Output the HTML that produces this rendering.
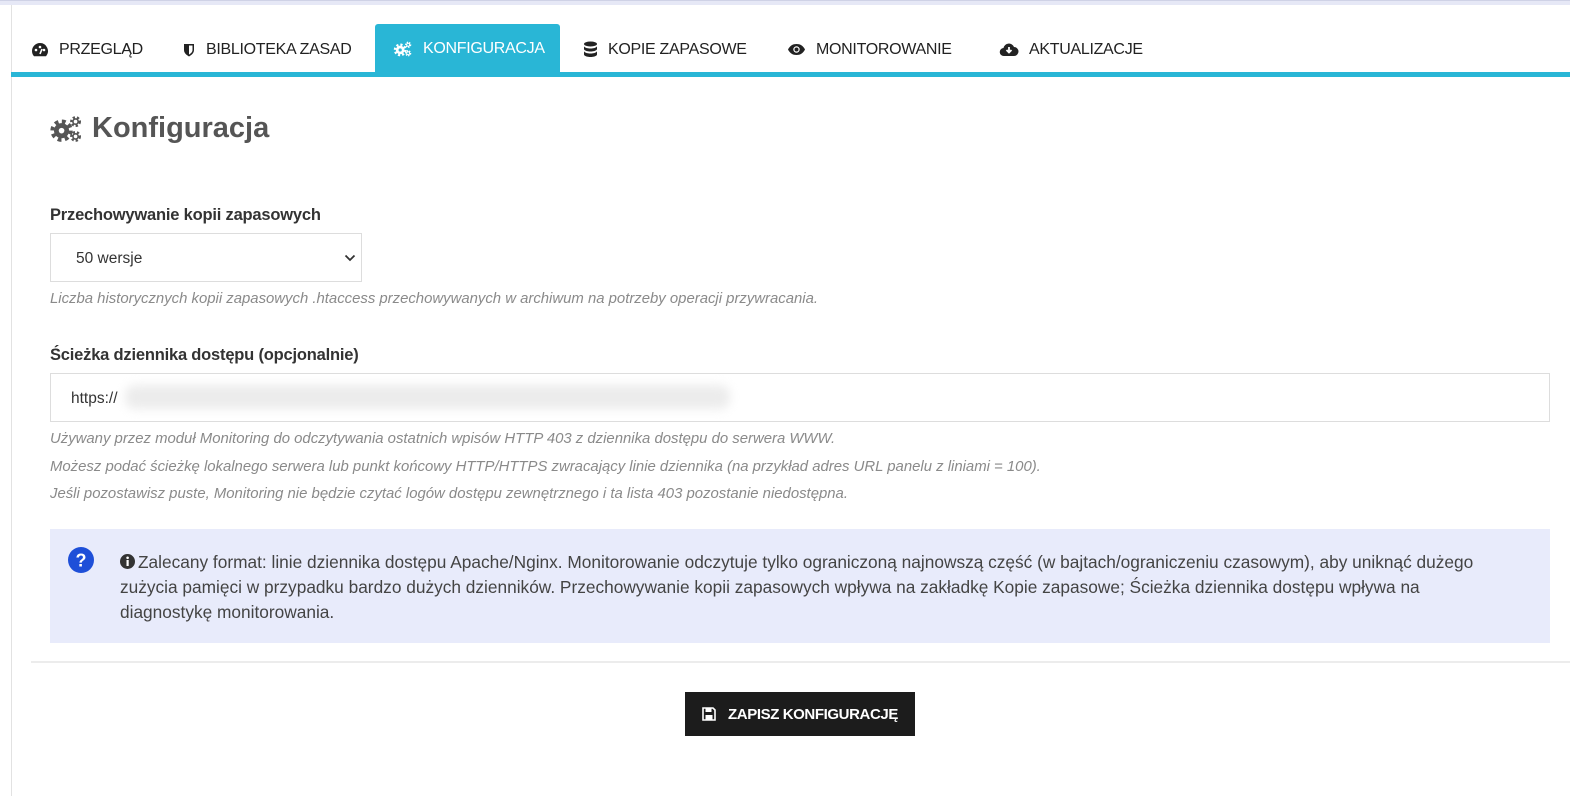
<!DOCTYPE html>
<html><head><meta charset="utf-8"><style>
*{margin:0;padding:0;box-sizing:border-box}
body{width:1570px;height:796px;background:#fff;font-family:"Liberation Sans",sans-serif;color:#333;position:relative;overflow:hidden}
.abs{position:absolute}
.top{left:0;top:0;width:1570px;height:5px;background:#e6e8f6;border-top:1px solid #cfd2e6}
.lb{left:11px;top:5px;width:1px;height:791px;background:#e2e2e2}
.tab{position:absolute;top:25px;height:49px;display:flex;align-items:center;font-size:16px;color:#222;white-space:nowrap;letter-spacing:-0.3px}
.tab svg{margin-right:10px}
.active{background:#29b6d6;color:#fff;border-radius:3px 3px 0 0;padding-left:18px;width:185px;left:375px;top:24px;height:49px}
.bar{left:11px;top:72px;width:1559px;height:5px;background:#29b6d6}
h1{position:absolute;left:50px;top:112px;font-size:29px;color:#555;font-weight:bold;display:flex;align-items:center}
label{position:absolute;font-size:16.5px;color:#333;font-weight:bold;letter-spacing:-0.2px}
.help{position:absolute;left:50px;font-size:14.9px;font-style:italic;color:#8a8a8a;white-space:nowrap}
.sel{left:50px;top:233px;width:312px;height:49px;border:1px solid #ddd;font-size:15.5px;padding:16px 25px;color:#333}
.inp{left:50px;top:373px;width:1500px;height:49px;border:1px solid #ddd;font-size:15.5px;padding:16px 20px}
.blur{left:125px;top:385px;width:605px;height:24px;background:#ececec;filter:blur(5px);border-radius:10px}
.info{left:50px;top:529px;width:1500px;height:114px;background:#e8ebfb}
.info p{position:absolute;left:70px;top:21px;width:1395px;font-size:17.3px;line-height:25px;color:#444}
.hr{left:31px;top:661px;width:1539px;height:2px;background:#ececec}
.btn{left:685px;top:692px;width:230px;height:44px;background:#1c1c1c;color:#fff;font-weight:bold;font-size:15px;display:flex;align-items:center;justify-content:center;letter-spacing:-0.4px}
</style></head><body>
<div class="abs top"></div>
<div class="abs lb"></div>

<div class="tab" style="left:31px"><svg width="18" height="16" viewBox="0 0 18 16"><path d="M9 1a8 8 0 0 0-8 8c0 2 .7 3.8 2 5.2h12A8 8 0 0 0 9 1z" fill="#222"/><circle cx="5" cy="8" r="1.3" fill="#fff"/><circle cx="9" cy="5" r="1.3" fill="#fff"/><circle cx="13" cy="8" r="1.3" fill="#fff"/><path d="M9 12l2-5" stroke="#fff" stroke-width="1.6"/></svg>PRZEGLĄD</div>
<div class="tab" style="left:182px"><svg width="14" height="16" viewBox="0 0 14 16"><path d="M2 2h10v6c0 3-2.5 5-5 6.5C4.5 13 2 11 2 8z" fill="#222"/><path d="M7 3.5h3.5V8c0 2-1.6 3.4-3.5 4.6z" fill="#fff"/></svg>BIBLIOTEKA ZASAD</div>
<div class="tab active"><svg width="20" height="16" viewBox="0 0 20 17"><circle cx="7" cy="9.5" r="5.6" fill="none" stroke="#fff" stroke-width="2.4" stroke-dasharray="2.3 2.1"/><circle cx="7" cy="9.5" r="4.6" fill="#fff"/><circle cx="7" cy="9.5" r="1.7" fill="#29b6d6"/><circle cx="15.5" cy="4" r="2.4" fill="none" stroke="#fff" stroke-width="1.8" stroke-dasharray="1.3 1.1"/><circle cx="15.5" cy="4" r="1.6" fill="none" stroke="#fff" stroke-width="1"/><circle cx="15.5" cy="13" r="2.4" fill="none" stroke="#fff" stroke-width="1.8" stroke-dasharray="1.3 1.1"/><circle cx="15.5" cy="13" r="1.6" fill="none" stroke="#fff" stroke-width="1"/></svg>KONFIGURACJA</div>
<div class="tab" style="left:583px"><svg width="15" height="17" viewBox="0 0 15 17"><ellipse cx="7.5" cy="3" rx="6.5" ry="2.5" fill="#222"/><path d="M1 5c0 1.4 3 2.5 6.5 2.5S14 6.4 14 5v3c0 1.4-3 2.5-6.5 2.5S1 9.4 1 8zM1 10c0 1.4 3 2.5 6.5 2.5S14 11.4 14 10v3.5c0 1.4-3 2.5-6.5 2.5S1 14.9 1 13.5z" fill="#222"/></svg>KOPIE ZAPASOWE</div>
<div class="tab" style="left:787px"><svg width="19" height="13" viewBox="0 0 19 13"><path d="M1 6.5C3 2.5 6 1 9.5 1S16 2.5 18 6.5C16 10.5 13 12 9.5 12S3 10.5 1 6.5z" fill="#222"/><circle cx="9.5" cy="6.5" r="3.2" fill="#fff"/><circle cx="9.5" cy="6.5" r="2" fill="#222"/></svg>MONITOROWANIE</div>
<div class="tab" style="left:999px"><svg width="20" height="15" viewBox="0 0 20 15"><path d="M5 14a4 4 0 0 1-.5-8A5.5 5.5 0 0 1 15 5a4.5 4.5 0 0 1 0 9z" fill="#222"/><path d="M10 5v5M7.5 8l2.5 2.5L12.5 8" stroke="#fff" stroke-width="1.8" fill="none"/></svg>AKTUALIZACJE</div>
<div class="abs bar"></div>

<h1><svg width="33" height="28" viewBox="0 0 20 17" style="margin-right:9px"><circle cx="7" cy="9.5" r="5.6" fill="none" stroke="#555" stroke-width="2.4" stroke-dasharray="2.3 2.1"/><circle cx="7" cy="9.5" r="4.6" fill="#555"/><circle cx="7" cy="9.5" r="1.7" fill="#fff"/><circle cx="15.5" cy="4" r="2.4" fill="none" stroke="#555" stroke-width="1.8" stroke-dasharray="1.3 1.1"/><circle cx="15.5" cy="4" r="1.6" fill="none" stroke="#555" stroke-width="1"/><circle cx="15.5" cy="13" r="2.4" fill="none" stroke="#555" stroke-width="1.8" stroke-dasharray="1.3 1.1"/><circle cx="15.5" cy="13" r="1.6" fill="none" stroke="#555" stroke-width="1"/></svg>Konfiguracja</h1>

<label style="left:50px;top:206px">Przechowywanie kopii zapasowych</label>
<div class="abs sel">50 wersje<svg class="abs" style="right:5px;top:20px" width="12" height="8" viewBox="0 0 12 8"><path d="M1.5 1.5L6 6l4.5-4.5" stroke="#333" stroke-width="1.8" fill="none"/></svg></div>
<div class="help" style="top:291px">Liczba historycznych kopii zapasowych .htaccess przechowywanych w archiwum na potrzeby operacji przywracania.</div>

<label style="left:50px;top:346px">Ścieżka dziennika dostępu (opcjonalnie)</label>
<div class="abs inp">https://</div>
<div class="abs blur"></div>
<div class="help" style="top:431px">Używany przez moduł Monitoring do odczytywania ostatnich wpisów HTTP 403 z dziennika dostępu do serwera WWW.</div>
<div class="help" style="top:459px">Możesz podać ścieżkę lokalnego serwera lub punkt końcowy HTTP/HTTPS zwracający linie dziennika (na przykład adres URL panelu z liniami = 100).</div>
<div class="help" style="top:486px">Jeśli pozostawisz puste, Monitoring nie będzie czytać logów dostępu zewnętrznego i ta lista 403 pozostanie niedostępna.</div>

<div class="abs info">
<svg class="abs" style="left:18px;top:18px" width="26" height="26" viewBox="0 0 26 26"><circle cx="13" cy="13" r="13" fill="#1e4fd8"/><text x="13" y="19.5" font-family="Liberation Sans" font-weight="bold" font-size="18" fill="#fff" text-anchor="middle">?</text></svg>
<p><svg width="15" height="15" viewBox="0 0 15 15" style="vertical-align:-1px;margin-right:3px"><circle cx="7.5" cy="7.5" r="7.5" fill="#333"/><rect x="6.5" y="6" width="2.2" height="6" fill="#fff"/><circle cx="7.6" cy="3.8" r="1.3" fill="#fff"/></svg>Zalecany format: linie dziennika dostępu Apache/Nginx. Monitorowanie odczytuje tylko ograniczoną najnowszą część (w bajtach/ograniczeniu czasowym), aby uniknąć dużego zużycia pamięci w przypadku bardzo dużych dzienników. Przechowywanie kopii zapasowych wpływa na zakładkę Kopie zapasowe; Ścieżka dziennika dostępu wpływa na diagnostykę monitorowania.</p>
</div>
<div class="abs hr"></div>
<div class="abs btn"><svg width="14" height="14" viewBox="0 0 14 14" style="margin-right:12px"><path d="M1 1h10l2 2v10H1z" fill="none" stroke="#fff" stroke-width="1.6"/><rect x="3.5" y="1.5" width="6" height="3.5" fill="#fff"/><rect x="3.5" y="8" width="7" height="4.5" fill="#fff"/></svg>ZAPISZ KONFIGURACJĘ</div>
</body></html>
